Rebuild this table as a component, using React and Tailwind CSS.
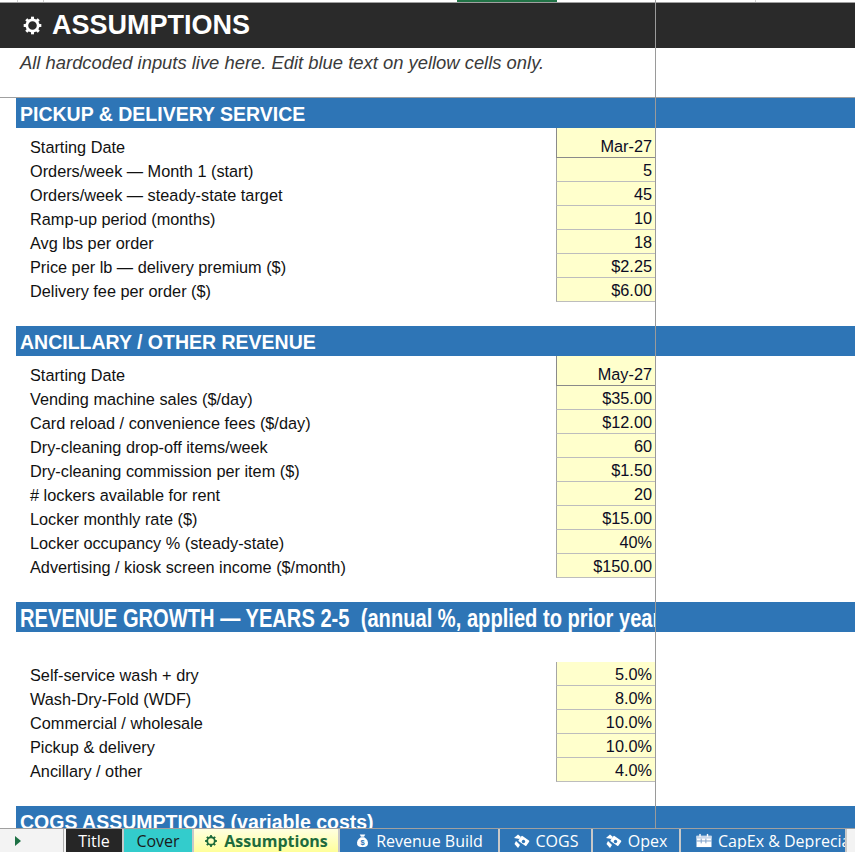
import React from "react";

const pickup = [
  ["Starting Date", "Mar-27"],
  ["Orders/week — Month 1 (start)", "5"],
  ["Orders/week — steady-state target", "45"],
  ["Ramp-up period (months)", "10"],
  ["Avg lbs per order", "18"],
  ["Price per lb — delivery premium ($)", "$2.25"],
  ["Delivery fee per order ($)", "$6.00"],
];

const ancillary = [
  ["Starting Date", "May-27"],
  ["Vending machine sales ($/day)", "$35.00"],
  ["Card reload / convenience fees ($/day)", "$12.00"],
  ["Dry-cleaning drop-off items/week", "60"],
  ["Dry-cleaning commission per item ($)", "$1.50"],
  ["# lockers available for rent", "20"],
  ["Locker monthly rate ($)", "$15.00"],
  ["Locker occupancy % (steady-state)", "40%"],
  ["Advertising / kiosk screen income ($/month)", "$150.00"],
];

const growth = [
  ["Self-service wash + dry", "5.0%"],
  ["Wash-Dry-Fold (WDF)", "8.0%"],
  ["Commercial / wholesale", "10.0%"],
  ["Pickup & delivery", "10.0%"],
  ["Ancillary / other", "4.0%"],
];

function Gear({ className, color = "#fff" }) {
  const teeth = [0, 45, 90, 135, 180, 225, 270, 315];
  return (
    <svg viewBox="0 0 20 20" className={className}>
      {teeth.map(a => (
        <rect key={a} x="8.6" y="1.6" width="2.8" height="3.2" fill={color} transform={`rotate(${a} 10 10)`} />
      ))}
      <circle cx="10" cy="10" r="5.4" fill="none" stroke={color} strokeWidth="2.6" />
    </svg>
  );
}

function MoneyBag() {
  return (
    <svg viewBox="0 0 16 16" className="w-[15px] h-[15px] shrink-0">
      <path d="M5 1.5 L11 1.5 L9.6 4 L6.4 4 Z" fill="#fff" />
      <path d="M6.2 4.6 H9.8 C13 6.5 14.5 9.5 13.6 12.6 C13 14.4 11.2 15 8 15 C4.8 15 3 14.4 2.4 12.6 C1.5 9.5 3 6.5 6.2 4.6 Z" fill="#fff" />
      <text x="8" y="13.3" textAnchor="middle" fontSize="8" fontWeight="bold" fill="#2e75b6" fontFamily="Liberation Sans, sans-serif">$</text>
    </svg>
  );
}

function HandMoney() {
  return (
    <svg viewBox="0 0 18 16" className="w-[18px] h-[16px] shrink-0">
      <path d="M1 5 L5 1.5 L8 4 L6.5 6 Z" fill="#fff" />
      <rect x="6" y="4.5" width="9.5" height="6.5" rx="0.8" fill="#fff" transform="rotate(35 10.5 8)" />
      <circle cx="10.5" cy="8.5" r="1.7" fill="#2e75b6" />
      <path d="M3 8 L7 12 L5 15 L1.5 11 Z" fill="#fff" />
    </svg>
  );
}

function Calendar() {
  return (
    <svg viewBox="0 0 18 16" className="w-[18px] h-[15px] shrink-0">
      <rect x="1" y="3" width="16" height="12" fill="#fff" />
      <rect x="1" y="3" width="16" height="3" fill="#c9d7ea" />
      <path d="M6 6 V11 M11 6 V11 M1 8.5 H17" stroke="#7a9cc6" strokeWidth="1" />
      <rect x="4" y="1" width="1.5" height="3" fill="#fff" />
      <rect x="12" y="1" width="1.5" height="3" fill="#fff" />
    </svg>
  );
}

function SectionHeader({ title, narrow }) {
  return (
    <div className="h-[30px] flex">
      <div className="w-[16px] shrink-0" />
      <div className="flex-1 bg-[#2e75b6] flex items-center overflow-hidden">
        <div className="w-[639px] shrink-0 overflow-hidden pl-[4px] pt-[2px]">
          <span
            className={
              narrow
                ? "block whitespace-pre text-white font-bold text-[25px] leading-[28px] origin-left scale-x-[0.805] w-[1000px]"
                : "block whitespace-nowrap text-white font-bold text-[19.5px] leading-[26px]"
            }
          >
            {title}
          </span>
        </div>
      </div>
    </div>
  );
}

function Row({ label, value, first }) {
  return (
    <div className={first ? "h-[30px] flex" : "h-[24px] flex"}>
      <div className="w-[556px] shrink-0 pl-[30px] flex items-end pb-[2px] text-[16.3px] leading-[18px] text-[#111] whitespace-nowrap">
        {label}
      </div>
      <div
        className={
          first
            ? "w-[99px] shrink-0 bg-[#ffffcc] border-l border-b border-[#8a8a8a] flex items-end justify-end pr-[3px] pb-[2px] text-[16.3px] leading-[18px] text-[#0c0c24]"
            : "w-[99px] shrink-0 bg-[#ffffcc] border-l border-b border-l-[#a6a6a6] border-b-[#bdbdbd] flex items-end justify-end pr-[3px] pb-[2px] text-[16.3px] leading-[18px] text-[#0c0c24]"
        }
      >
        {value}
      </div>
    </div>
  );
}

function Section({ title, rows, narrow, gap }) {
  return (
    <div>
      <SectionHeader title={title} narrow={narrow} />
      {gap && <div className="h-[30px]" />}
      {rows.map(([l, v], i) => (
        <Row key={l + i} label={l} value={v} first={!gap && i === 0} />
      ))}
      <div className="h-[24px]" />
    </div>
  );
}

function Tab({ children, className }) {
  return (
    <div className={"h-full flex items-center shrink-0 border-r-2 border-[#c8c8c8] " + className}>
      {children}
    </div>
  );
}

export default function App() {
  return (
    <div className="relative w-[855px] h-[852px] overflow-hidden bg-white font-['Liberation_Sans',Arial,sans-serif]">
      <div className="h-[828px] overflow-hidden">
        {/* column header remnant */}
        <div className="relative h-[3px] border-b border-[#a0a0a0]">
          <div className="absolute left-[17px] top-0 h-[2px] w-px bg-[#d0d0d0]" />
          <div className="absolute left-[43px] top-0 h-[2px] w-px bg-[#d0d0d0]" />
          <div className="absolute left-[457px] top-0 h-[2px] w-[100px] bg-[#217346]" />
          <div className="absolute left-[755px] top-0 h-[2px] w-px bg-[#d0d0d0]" />
        </div>

        {/* title */}
        <div className="h-[45px] bg-[#2a2a2a] flex items-center pl-[22px] gap-[9px]">
          <Gear className="w-[21px] h-[21px]" />
          <span className="text-white font-bold text-[27px] leading-none">ASSUMPTIONS</span>
        </div>

        <div className="h-[50px] border-b border-[#a0a0a0] pl-[20px] pt-[4px]">
          <span className="italic text-[18.4px] leading-[20px] text-[#3a3a3a]">
            All hardcoded inputs live here. Edit blue text on yellow cells only.
          </span>
        </div>

        <Section title="PICKUP & DELIVERY SERVICE" rows={pickup} />
        <Section title="ANCILLARY / OTHER REVENUE" rows={ancillary} />
        <Section title="REVENUE GROWTH — YEARS 2-5  (annual %, applied to prior year)" rows={growth} narrow gap />
        <SectionHeader title="COGS ASSUMPTIONS (variable costs)" />
      </div>

      {/* frozen pane divider */}
      <div className="absolute left-[655px] top-0 h-[828px] w-px bg-[#9a9a9a]" />

      {/* sheet tabs */}
      <div className="h-[24px] flex border-t border-[#a0a0a0] bg-[#f3f3f3] font-['Open_Sans','Noto_Sans',sans-serif] text-[16px] leading-none">
        <div className="w-[64px] shrink-0 h-full flex items-center pl-[15px] border-r border-[#b0b0b0]">
          <div className="w-0 h-0 border-y-[5px] border-y-transparent border-l-[6px] border-l-[#1e7145]" />
        </div>
        <div className="w-[2px] shrink-0" />
        <Tab className="w-[58px] bg-[#262626] text-white justify-center">Title</Tab>
        <Tab className="w-[70px] bg-[#33cccc] text-[#1a1a1a] justify-center">Cover</Tab>
        <Tab className="w-[146px] bg-gradient-to-b from-[#ffffe0] to-[#ffff99] text-[#1e6b3c] font-bold justify-center gap-[6px]">
          <Gear className="w-[14px] h-[14px] shrink-0" color="#1e6b3c" />
          Assumptions
        </Tab>
        <Tab className="w-[160px] bg-[#2e75b6] text-white justify-center gap-[6px]">
          <MoneyBag />
          Revenue Build
        </Tab>
        <Tab className="w-[93px] bg-[#2e75b6] text-white justify-center gap-[5px]">
          <HandMoney />
          COGS
        </Tab>
        <Tab className="w-[88px] bg-[#2e75b6] text-white justify-center gap-[5px]">
          <HandMoney />
          Opex
        </Tab>
        <Tab className="w-[166px] bg-[#2e75b6] text-white pl-[14px] gap-[5px] overflow-hidden whitespace-nowrap">
          <Calendar />
          <span className="overflow-hidden">CapEx &amp; Depreciation</span>
        </Tab>
      </div>
    </div>
  );
}
